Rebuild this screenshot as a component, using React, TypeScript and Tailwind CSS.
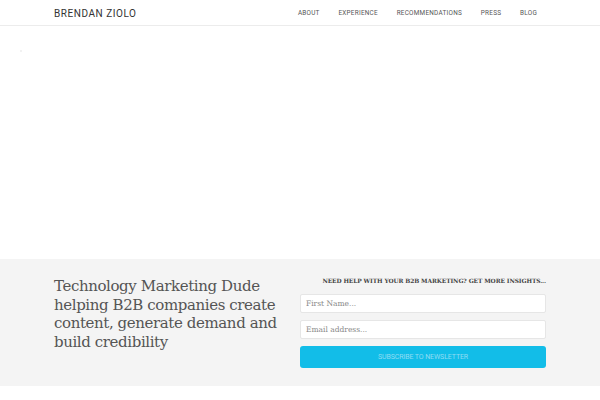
import React from "react";

export default function App() {
  const nav = ["ABOUT", "EXPERIENCE", "RECOMMENDATIONS", "PRESS", "BLOG"];
  return (
    <div className="w-[600px] h-[400px] bg-white overflow-hidden" style={{ fontFamily: "Roboto, 'Liberation Sans', sans-serif" }}>
      <header className="h-[26px] border-b border-[#ececec] flex items-center justify-between pl-[54px] pr-[63px] pt-[1px]">
        <div className="text-[10px] tracking-[0.55px] text-[#333] font-normal">BRENDAN ZIOLO</div>
        <nav className="flex gap-[18.75px] text-[6.4px] tracking-[0.25px] text-[#555] pt-[1px]">
          {nav.map((n) => (
            <span key={n}>{n}</span>
          ))}
        </nav>
      </header>
      <div className="h-[233px] relative">
        <div className="absolute left-[20px] top-[24px] w-[2px] h-[2px] rounded-full bg-[#eee]" />
      </div>
      <section className="h-[127px] bg-[#f4f4f4] flex pl-[54px] pr-[54px] pt-[17px]">
        <div className="w-[230px] text-[15px] leading-[18.5px] text-[#555] pt-[1px]" style={{ fontFamily: "'DejaVu Serif', serif", letterSpacing: "-0.4px" }}>
          Technology Marketing Dude helping B2B companies create content, generate demand and build credibility
        </div>
        <div className="ml-auto w-[246px] flex flex-col">
          <div className="text-right text-[5.9px] font-bold text-[#444] tracking-[-0.1px] h-[18px] whitespace-nowrap pt-[1px]" style={{ fontFamily: "'DejaVu Serif', serif" }}>
            NEED HELP WITH YOUR B2B MARKETING? GET MORE INSIGHTS...
          </div>
          <div className="h-[19px] bg-white border border-[#e6e6e6] rounded-[2px] flex items-center pl-[5px] text-[7.5px] text-[#888]" style={{ fontFamily: "'DejaVu Serif', serif" }}>
            First Name...
          </div>
          <div className="h-[19px] mt-[7px] bg-white border border-[#e6e6e6] rounded-[2px] flex items-center pl-[5px] text-[7.5px] text-[#888]" style={{ fontFamily: "'DejaVu Serif', serif" }}>
            Email address...
          </div>
          <div className="h-[22px] mt-[7px] bg-[#12bde8] rounded-[3px] flex items-center justify-center text-[7px] text-[#8fdcf3] tracking-[-0.1px]">
            SUBSCRIBE TO NEWSLETTER
          </div>
        </div>
      </section>
    </div>
  );
}
